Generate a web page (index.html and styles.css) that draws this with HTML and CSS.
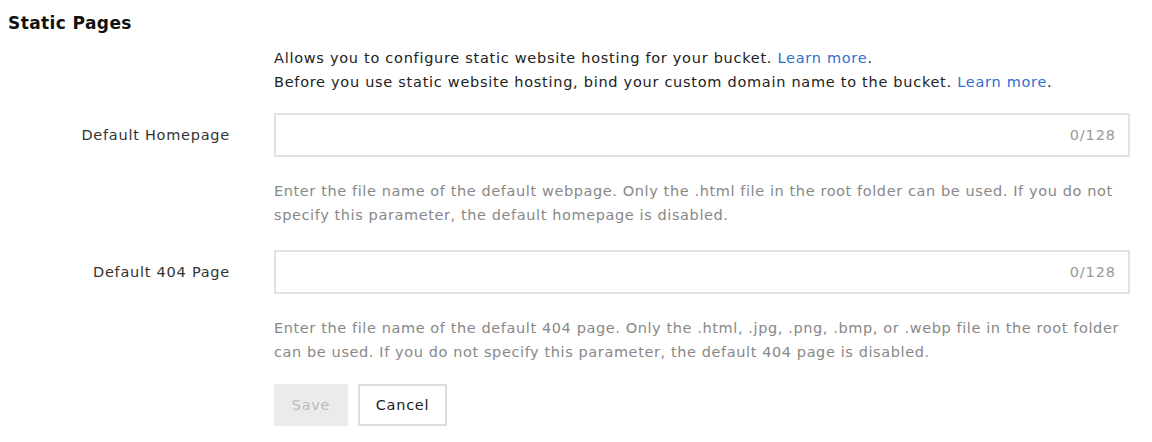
FILE: index.html
```html
<!DOCTYPE html>
<html>
<head>
<meta charset="utf-8">
<link rel="stylesheet" href="styles.css">
</head>
<body>
<div class="page">
  <h2 class="title">Static Pages</h2>
  <div class="form">
    <div class="row intro-row">
      <div class="label"></div>
      <div class="field intro">
        <p>Allows you to configure static website hosting for your bucket. <a href="#">Learn more</a>.</p>
        <p>Before you use static website hosting, bind your custom domain name to the bucket. <a href="#">Learn more</a>.</p>
      </div>
    </div>
    <div class="row input-row">
      <div class="label">Default Homepage</div>
      <div class="field">
        <div class="input"><span class="count">0/128</span></div>
      </div>
    </div>
    <div class="row help-row">
      <div class="label"></div>
      <div class="field">
        <div class="help">Enter the file name of the default webpage. Only the .html file in the root folder can be used. If you do not specify this parameter, the default homepage is disabled.</div>
      </div>
    </div>
    <div class="row input-row">
      <div class="label">Default 404 Page</div>
      <div class="field">
        <div class="input"><span class="count">0/128</span></div>
      </div>
    </div>
    <div class="row help-row">
      <div class="label"></div>
      <div class="field">
        <div class="help">Enter the file name of the default 404 page. Only the .html, .jpg, .png, .bmp, or .webp file in the root folder can be used. If you do not specify this parameter, the default 404 page is disabled.</div>
      </div>
    </div>
    <div class="row button-row">
      <div class="label"></div>
      <div class="field buttons">
        <button class="btn btn-disabled">Save</button>
        <button class="btn btn-default">Cancel</button>
      </div>
    </div>
  </div>
</div>
</body>
</html>
```
FILE: styles.css
```css
* { box-sizing: border-box; }
body {
  margin: 0;
  background: #fff;
  font-family: "DejaVu Sans", "Liberation Sans", sans-serif;
  color: #222;
}
.page { padding: 10px 8px 0 8px; }
.title {
  margin: 0;
  font-size: 17px;
  letter-spacing: 0.4px;
  font-weight: bold;
  line-height: 26px;
  color: #111;
}
.form { display: flex; flex-direction: column; }
.row { display: flex; align-items: center; }
.label {
  width: 222px;
  flex: none;
  text-align: right;
  font-size: 14.5px;
  letter-spacing: 0.75px;
  color: #333;
}
.field { margin-left: 44px; width: 856px; }
.intro {
  padding-top: 10px;
  font-size: 14.5px;
  letter-spacing: 0.72px;
  line-height: 24px;
  color: #222;
}
.intro p { margin: 0; }
.intro a { color: #2e6fd0; text-decoration: none; }
.intro-row + .input-row { margin-top: 19px; }
.input-row + .help-row { margin-top: 22px; }
.help-row + .input-row { margin-top: 23px; }
.help-row + .button-row { margin-top: 20px; }
.input {
  height: 44px;
  border: 2px solid #e2e2e2;
  display: flex;
  align-items: center;
  justify-content: flex-end;
  padding-right: 12px;
}
.count { color: #999; font-size: 14.5px; letter-spacing: 0.9px; }
.help {
  font-size: 14.5px;
  letter-spacing: 0.6px;
  line-height: 24px;
  color: #888;
}
.buttons { display: flex; gap: 10px; }
.btn {
  height: 42px;
  font-family: inherit;
  font-size: 14.5px;
  letter-spacing: 0.75px;
  padding: 0;
  border: 2px solid #ddd;
  background: #fff;
  color: #222;
}
.btn-disabled { background: #ebebeb; border-color: #ebebeb; color: #bbb; width: 74px; }
.btn-default { width: 89px; }
```
